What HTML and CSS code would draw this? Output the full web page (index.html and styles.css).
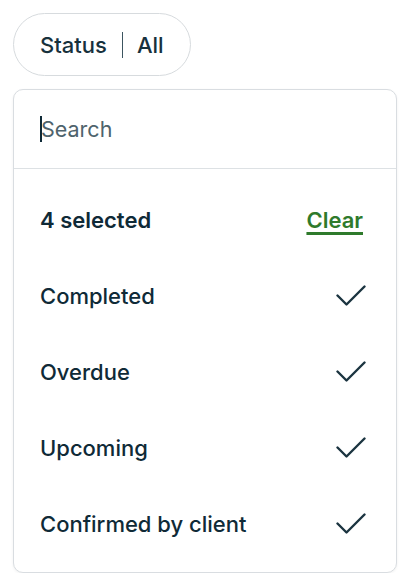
FILE: index.html
```html
<!DOCTYPE html>
<html>
<head>
<meta charset="utf-8">
<link rel="stylesheet" href="styles.css">
</head>
<body>
<div class="wrap">
  <button class="pill"><span class="pill-label">Status</span><span class="pill-sep"></span><span class="pill-value">All</span></button>
  <div class="panel">
    <div class="search"><span class="caret"></span><span class="placeholder">Search</span></div>
    <div class="list">
      <div class="row head"><span class="count">4 selected</span><a class="clear">Clear</a></div>
      <div class="row"><span>Completed</span><svg class="check" viewBox="0 0 30 22"><path d="M1.5 10.5 L10.5 19.5 L28.5 1.5"/></svg></div>
      <div class="row"><span>Overdue</span><svg class="check" viewBox="0 0 30 22"><path d="M1.5 10.5 L10.5 19.5 L28.5 1.5"/></svg></div>
      <div class="row"><span>Upcoming</span><svg class="check" viewBox="0 0 30 22"><path d="M1.5 10.5 L10.5 19.5 L28.5 1.5"/></svg></div>
      <div class="row"><span>Confirmed by client</span><svg class="check" viewBox="0 0 30 22"><path d="M1.5 10.5 L10.5 19.5 L28.5 1.5"/></svg></div>
    </div>
  </div>
</div>
</body>
</html>
```
FILE: styles.css
```css
* { box-sizing: border-box; }
html, body { margin: 0; padding: 0; background: #fff; }
body { font-family: Inter, "Noto Sans", sans-serif; color: #0f2a37; }
.wrap { padding: 13px 0 0 13px; display: flex; flex-direction: column; align-items: flex-start; }
.pill {
  height: 63px; padding: 0 26px; border: 1px solid #d7dbde; border-radius: 32px;
  background: #fff; display: inline-flex; align-items: center; gap: 0;
  font-family: inherit; font-size: 22px; font-weight: 500; color: #17313d;
}
.pill-sep { width: 1px; height: 26px; background: #3c5560; margin: 0 14px 0 15px; }
.panel {
  margin-top: 13px; width: 384px; border: 1px solid #d9dde1; border-radius: 10px;
  background: #fff; box-shadow: 0 1px 3px rgba(0,0,0,0.06);
}
.search {
  height: 79px; border-bottom: 1px solid #dde1e4; display: flex; align-items: center;
  padding-left: 26px; font-size: 21.5px;
}
.caret { width: 2px; height: 26px; background: #0f2a37; margin-right: -1px; }
.placeholder { color: #4e636c; font-weight: 400; }
.list { padding: 13px 0 10px; }
.row {
  height: 76px; display: flex; align-items: center; justify-content: space-between;
  padding: 0 30px 0 26px; font-size: 22px; font-weight: 500;
}
.head { padding-right: 33px; }
.count { font-weight: 600; }
.clear { color: #2f7a2c; font-weight: 600; text-decoration: underline; text-decoration-thickness: 3px; text-underline-offset: 4px; }
.check { width: 30px; height: 22px; fill: none; stroke: #1b3440; stroke-width: 2.4; stroke-linecap: round; stroke-linejoin: round; }
```
